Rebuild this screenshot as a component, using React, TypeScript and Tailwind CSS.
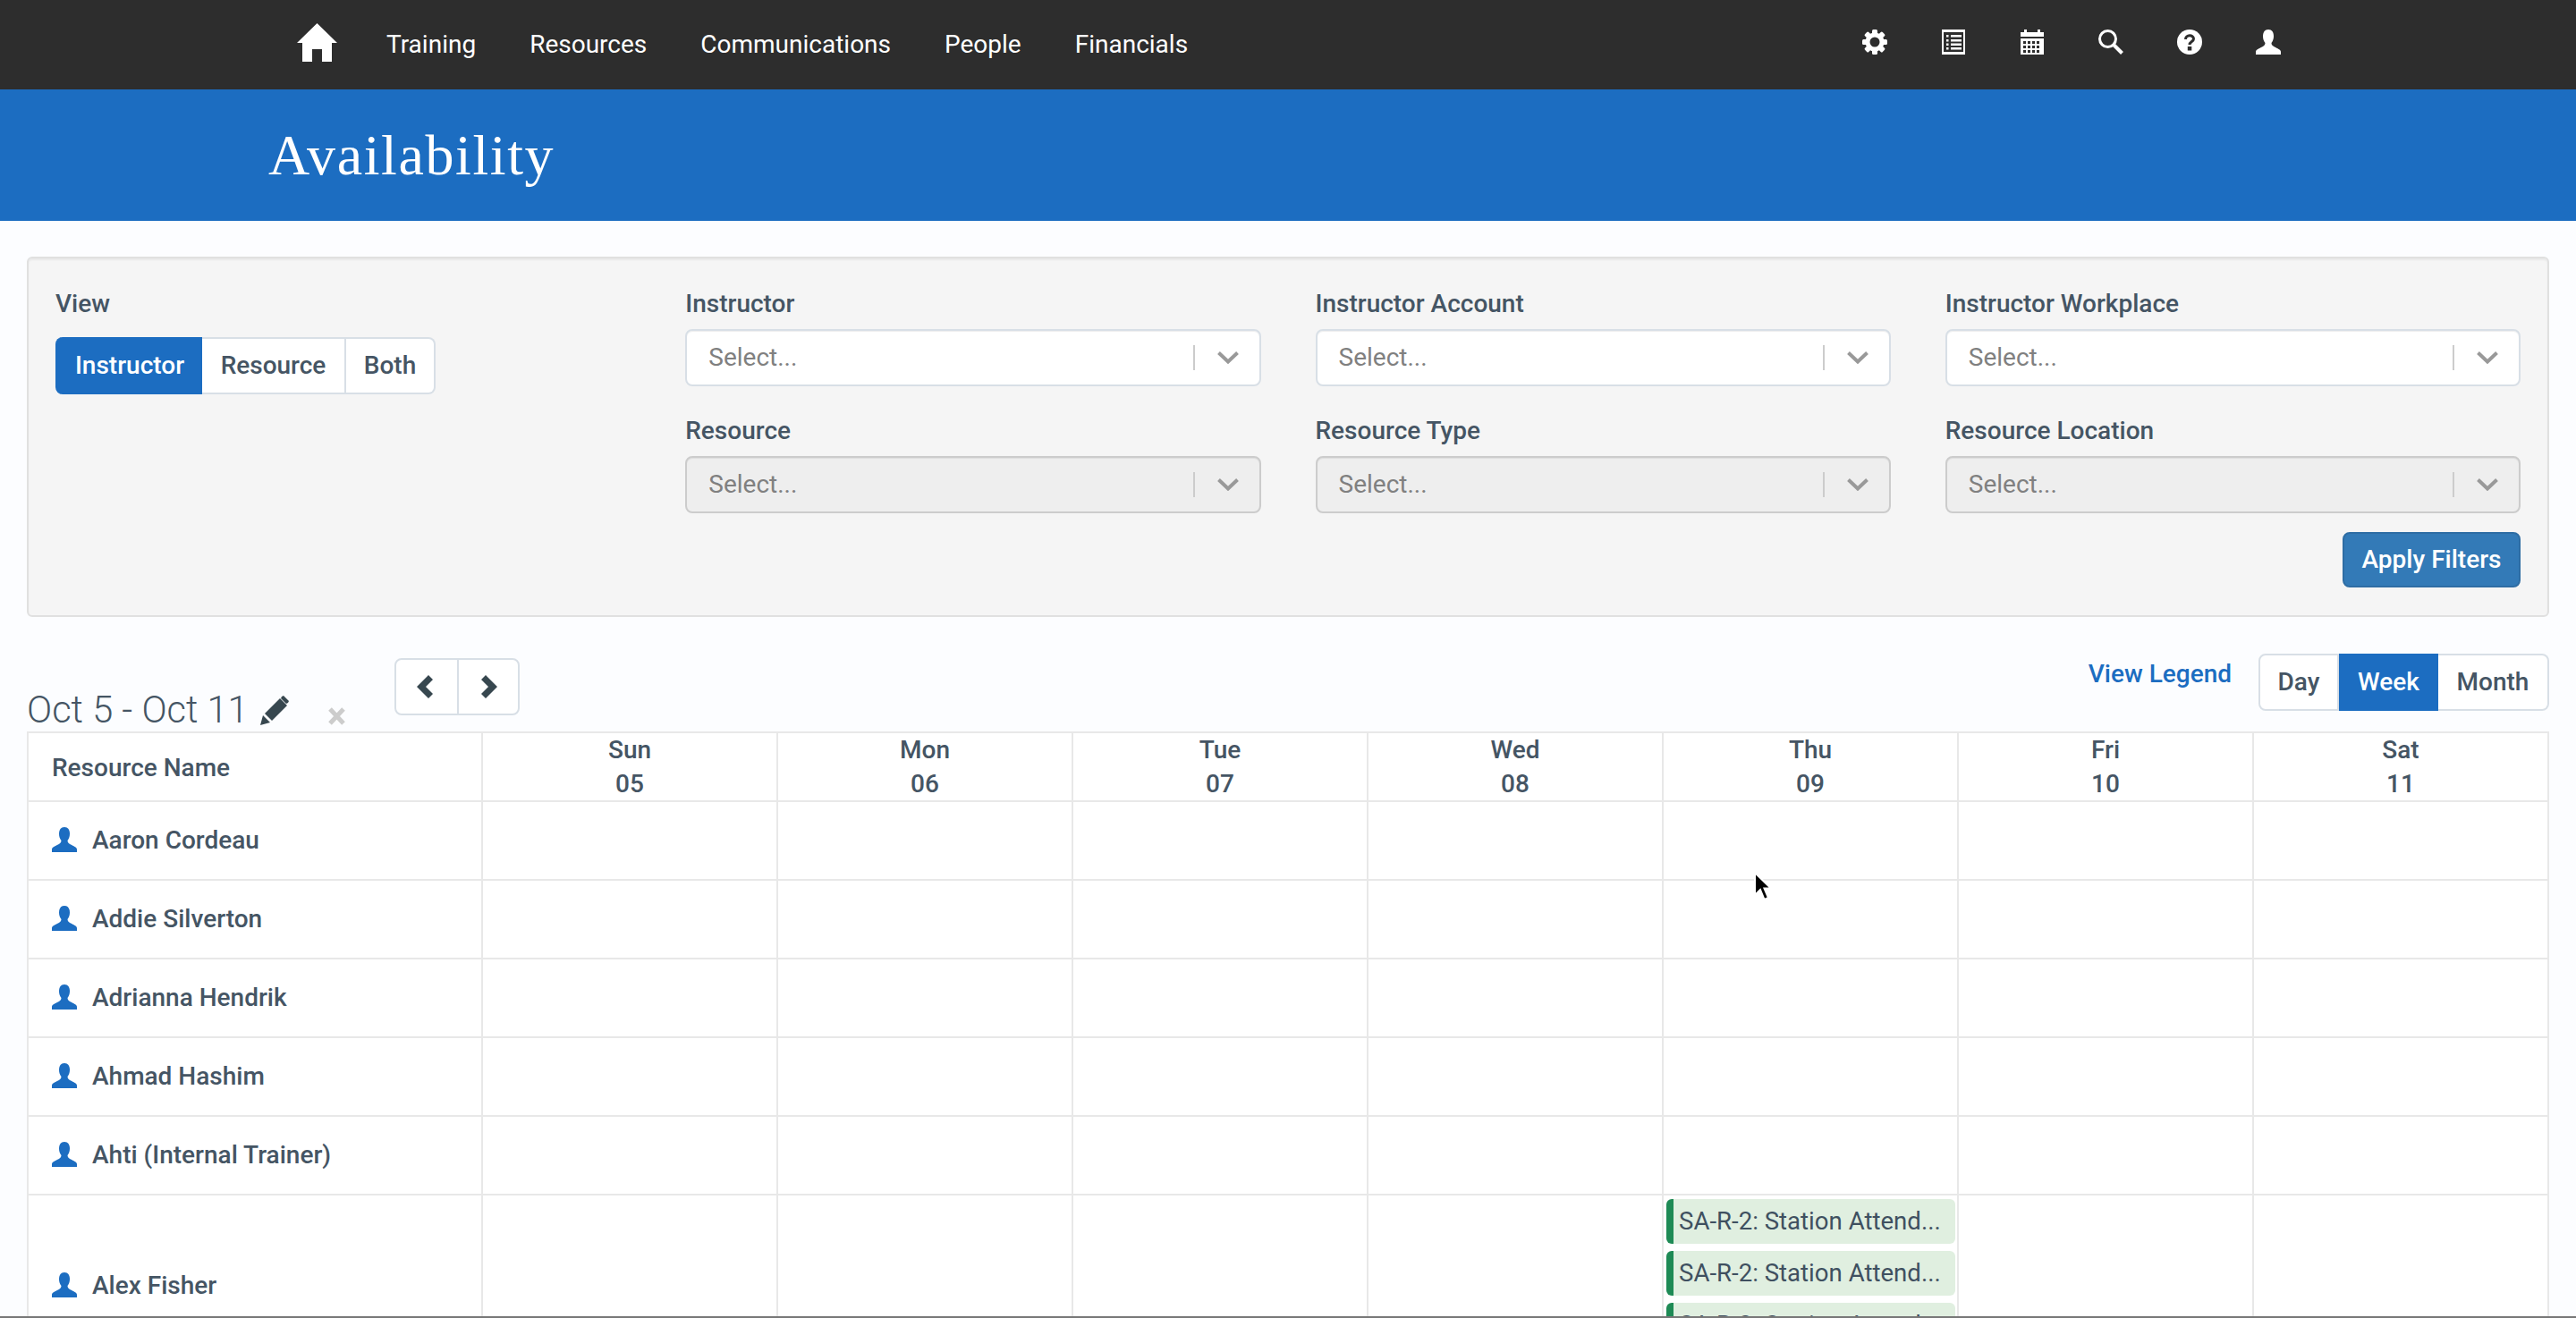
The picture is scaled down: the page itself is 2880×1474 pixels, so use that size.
const navItems = ['Training', 'Resources', 'Communications', 'People', 'Financials'];
const days = [
  ['Sun', '05'],
  ['Mon', '06'],
  ['Tue', '07'],
  ['Wed', '08'],
  ['Thu', '09'],
  ['Fri', '10'],
  ['Sat', '11'],
];
const people = ['Aaron Cordeau', 'Addie Silverton', 'Adrianna Hendrik', 'Ahmad Hashim', 'Ahti (Internal Trainer)'];

function HomeIcon() {
  return (
    <svg viewBox="0 0 45 43" className="mb-[5px] h-[43px] w-[45px]" fill="#fff">
      <path d="M22.5 0 45 22H39V43H28V29H17V43H6V22H0Z" />
    </svg>
  );
}

function GearIcon() {
  return (
    <svg viewBox="0 0 28 28" className="h-[28px] w-[28px]" fill="#fff">
      {[0, 45, 90, 135].map(a => (
        <rect key={a} x="11" y="0" width="6" height="28" rx="1.5" transform={`rotate(${a} 14 14)`} />
      ))}
      <circle cx="14" cy="14" r="10.5" />
      <circle cx="14" cy="14" r="5.5" fill="#2d2d2d" />
    </svg>
  );
}

function ListIcon() {
  return (
    <svg viewBox="0 0 26 28" className="h-[28px] w-[26px]" fill="#fff">
      <path fillRule="evenodd" d="M0 0H26V28H0ZM2 3V25H24V3Z" />
      <path d="M5 6H7.5V8.5H5ZM10 6H22V8.5H10ZM5 11H7.5V13.5H5ZM10 11H22V13.5H10ZM5 15.500H7.5V18H5ZM10 15.500H22V18H10ZM5 20H7.5V22.500H5ZM10 20H22V22.500H10Z" />
    </svg>
  );
}

function CalendarIcon() {
  return (
    <svg viewBox="0 0 26 28" className="h-[28px] w-[26px]" fill="#fff">
      <path d="M0 3H4V0H7V3H19V0H22V3H26V8H0Z" />
      <path
        fillRule="evenodd"
        d="M0 10H26V28H0ZM3 13V16H6V13ZM8 13V16H11V13ZM13 13V16H16V13ZM18 13V16H21V13ZM3 18V21H6V18ZM8 18V21H11V18ZM13 18V21H16V18ZM18 18V21H21V18ZM3 23V26H6V23ZM8 23V26H11V23ZM13 23V26H16V23ZM18 23V26H21V23Z"
      />
    </svg>
  );
}

function SearchIcon() {
  return (
    <svg viewBox="0 0 28 28" className="h-[28px] w-[28px]" fill="none" stroke="#fff">
      <circle cx="10.500" cy="10.500" r="9" strokeWidth="3" />
      <path d="M17 17 26.500 26.500" strokeWidth="4" />
    </svg>
  );
}

function HelpIcon() {
  return (
    <svg viewBox="0 0 28 28" className="h-[28px] w-[28px]">
      <circle cx="14" cy="14" r="14" fill="#fff" />
      <path d="M9.500 11C9.500 5.500 18.500 5.500 18.500 10.500C18.500 13.500 14 13.500 14 17" fill="none" stroke="#2d2d2d" strokeWidth="3" />
      <rect x="11.800" y="19" width="4.500" height="4.500" fill="#2d2d2d" />
    </svg>
  );
}

function UserIcon({ color }: { color: string }) {
  return (
    <svg viewBox="0 0 28 28" className="h-[28px] w-[28px] shrink-0" fill={color}>
      <path d="M14 0C18 0 20 3 20 7.500C20 10.500 19 13 17.500 15C17.500 17 18.500 18 21 19.500C24 21 28 22.500 28 25V28H0V25C0 22.500 4 21 7 19.500C9.500 18 10.500 17 10.500 15C9 13 8 10.500 8 7.500C8 3 10 0 14 0Z" />
    </svg>
  );
}

function Chevron() {
  return (
    <svg viewBox="0 0 24 14" className="h-[14px] w-[24px]" fill="none" stroke="#999" strokeWidth="4">
      <path d="M1.500 1.500 12 11.500 22.500 1.500" />
    </svg>
  );
}

function FakeSelect({ label, disabled }: { label: string; disabled?: boolean }) {
  return (
    <div>
      <div className="mb-[12px] h-[32px] text-[28px] leading-[32px] font-medium text-[#455564]">{label}</div>
      <div
        className={`flex h-[64px] items-center rounded-[8px] border-2 pl-[24px] pr-[23px] text-[28px] text-[#808080] shadow-[inset_0_1px_1px_rgba(0,0,0,0.075)] ${
          disabled ? 'border-[#cccccc] bg-[#eeeeee]' : 'border-[#d8dfe6] bg-white'
        }`}
      >
        <span className="flex-1">Select...</span>
        <span className="mr-[25px] h-[28px] w-[2px] bg-[#cccccc]" />
        <Chevron />
      </div>
    </div>
  );
}

function Segmented({ items, active, widths }: { items: string[]; active: string; widths: string[] }) {
  return (
    <div className="flex h-[64px]">
      {items.map((item, i) => (
        <div
          key={item}
          className={`flex items-center justify-center text-[28px] font-medium ${widths[i]} ${
            item === active
              ? 'border-[#1c6dc1] bg-[#1c6dc1] text-white'
              : 'border-y-2 border-r-2 border-[#d8dfe6] bg-white text-[#455564]'
          } ${i === 0 ? 'rounded-l-[8px] border-l-2' : ''} ${i === items.length - 1 ? 'rounded-r-[8px]' : ''}`}
        >
          {item}
        </div>
      ))}
    </div>
  );
}

function EventChip() {
  return (
    <div className="flex h-[50px] items-center overflow-hidden rounded-[6px] border-l-[8px] border-[#1e8a55] bg-[#e0efe0] pl-[6px] text-[27.6px] whitespace-nowrap text-[#3f5060]">
      SA-R-2: Station Attend...
    </div>
  );
}

function Row({ name, tall }: { name: string; tall?: boolean }) {
  return (
    <div
      className={`grid grid-cols-[506px_repeat(7,1fr)] border-b-[2px] border-[#e8e8e8] ${tall ? 'h-[204px]' : 'h-[88px]'}`}
    >
      <div className="flex items-center gap-[17px] pl-[26px] text-[28px] font-medium text-[#455564]">
        <span className="mb-[2px]">
          <UserIcon color="#1c6dc1" />
        </span>
        {name}
      </div>
      {days.map(d => (
        <div key={d[0]} className="border-l-[2px] border-[#e8e8e8] pl-[3px] pr-[2px] pt-[4px]">
          {tall && d[0] === 'Thu' && (
            <div className="flex flex-col gap-[8px]">
              <EventChip />
              <EventChip />
              <EventChip />
            </div>
          )}
        </div>
      ))}
    </div>
  );
}

export default function App() {
  return (
    <div
      className="relative h-[1474px] overflow-hidden bg-[#fcfdff]"
      style={{ fontFamily: 'Roboto, "Liberation Sans", sans-serif' }}
    >
      <header className="flex h-[100px] items-center bg-[#2d2d2d] pl-[332px] pr-[300px] text-white">
        <HomeIcon />
        <nav className="ml-[55px] flex gap-[60px] text-[28px]">
          {navItems.map(item => (
            <span key={item}>{item}</span>
          ))}
        </nav>
        <div className="mb-[6px] ml-auto flex items-center">
          {[
            <GearIcon key="gear" />,
            <ListIcon key="list" />,
            <CalendarIcon key="calendar" />,
            <SearchIcon key="search" />,
            <HelpIcon key="help" />,
            <UserIcon key="user" color="#fff" />,
          ].map((icon, i) => (
            <span key={i} className="flex w-[88px] justify-center">
              {icon}
            </span>
          ))}
        </div>
      </header>

      <div className="flex h-[147px] items-center bg-[#1c6dc1] pl-[300px]">
        <h1
          className="text-[64px] tracking-[1.6px] text-white"
          style={{ fontFamily: '"Liberation Serif", serif' }}
        >
          Availability
        </h1>
      </div>

      <main className="px-[30px] pt-[40px]">
        <section className="h-[403px] rounded-[6px] border-2 border-[#e0e0e0] bg-[#f5f5f5] pl-[30px] pr-[30px] pt-[35px] shadow-[inset_0_2px_2px_rgba(0,0,0,0.05)]">
          <div className="grid grid-cols-4 gap-x-[61px] gap-y-[34px]">
            <div className="row-span-2">
              <div className="mb-[21px] h-[32px] text-[28px] leading-[32px] font-medium text-[#455564]">View</div>
              <Segmented
                items={['Instructor', 'Resource', 'Both']}
                active="Instructor"
                widths={['w-[164px]', 'w-[161px]', 'w-[100px]']}
              />
            </div>
            <FakeSelect label="Instructor" />
            <FakeSelect label="Instructor Account" />
            <FakeSelect label="Instructor Workplace" />
            <FakeSelect label="Resource" disabled />
            <FakeSelect label="Resource Type" disabled />
            <FakeSelect label="Resource Location" disabled />
          </div>
          <div className="mt-[21px] flex justify-end">
            <div className="flex h-[62px] w-[199px] items-center justify-center rounded-[8px] border-2 border-[#2e6da4] bg-[#337ab7] text-[28px] font-medium text-white">
              Apply Filters
            </div>
          </div>
        </section>

        <div className="relative h-[128px]">
          <div className="absolute bottom-[-6px] left-0 flex items-center text-[41.6px] leading-[60px] font-light text-[#455564]">
            Oct 5 - Oct 11
            <svg viewBox="0 0 32 33" className="ml-[13px] h-[33px] w-[32px]" fill="#37474f">
              <path d="M0 33 3 22 11 30ZM5 20 22 3 30 11 13 28ZM24 1 26 0 32 6 31 8 29 9 23 3Z" />
            </svg>
            <svg viewBox="0 0 19 20" className="ml-[44px] mt-[14px] h-[20px] w-[19px]" stroke="#cccccc" strokeWidth="5">
              <path d="M2 2 17 18M17 2 2 18" />
            </svg>
          </div>
          <div className="absolute left-[411px] top-[46px] flex h-[64px] w-[140px] rounded-[8px] border-2 border-[#d8dfe6] bg-white">
            <div className="flex flex-1 items-center justify-center border-r-2 border-[#d8dfe6] pr-[4px]">
              <svg viewBox="0 0 18 26" className="h-[26px] w-[18px]" fill="#37474f">
                <path d="M13 0 18 5 10 13 18 21 13 26 0 13Z" />
              </svg>
            </div>
            <div className="flex flex-1 items-center justify-center pl-[3px]">
              <svg viewBox="0 0 18 26" className="h-[26px] w-[18px]" fill="#37474f">
                <path d="M5 0 0 5 8 13 0 21 5 26 18 13Z" />
              </svg>
            </div>
          </div>
          <div className="absolute right-0 top-[41px] flex items-start gap-[30px]">
            <span className="mt-[2px] text-[28px] font-medium text-[#1c6dc1]">View Legend</span>
            <Segmented
              items={['Day', 'Week', 'Month']}
              active="Week"
              widths={['w-[90px]', 'w-[111px]', 'w-[124px]']}
            />
          </div>
        </div>

        <div className="border-x-[2px] border-t-[2px] border-[#e8e8e8] bg-white">
          <div className="grid h-[77px] grid-cols-[506px_repeat(7,1fr)] border-b-[2px] border-[#e8e8e8] text-[28px] font-medium text-[#455564]">
            <div className="flex items-center pl-[26px]">Resource Name</div>
            {days.map(d => (
              <div key={d[0]} className="flex flex-col items-center justify-center border-l-[2px] border-[#e8e8e8] pb-[2px] leading-[38px]">
                <span>{d[0]}</span>
                <span>{d[1]}</span>
              </div>
            ))}
          </div>
          {people.map(p => (
            <Row key={p} name={p} />
          ))}
          <Row name="Alex Fisher" tall />
        </div>
      </main>

      <svg viewBox="0 0 22 34" className="absolute left-[1960px] top-[974px] h-[34px] w-[22px]">
        <path d="M2 2V27L8 21 12.500 32 17 30 12.500 19.500H20Z" fill="#000" stroke="#fff" strokeWidth="2" />
      </svg>
      <div className="absolute inset-x-0 bottom-0 h-[2px] bg-[#777777]" />
    </div>
  );
}
